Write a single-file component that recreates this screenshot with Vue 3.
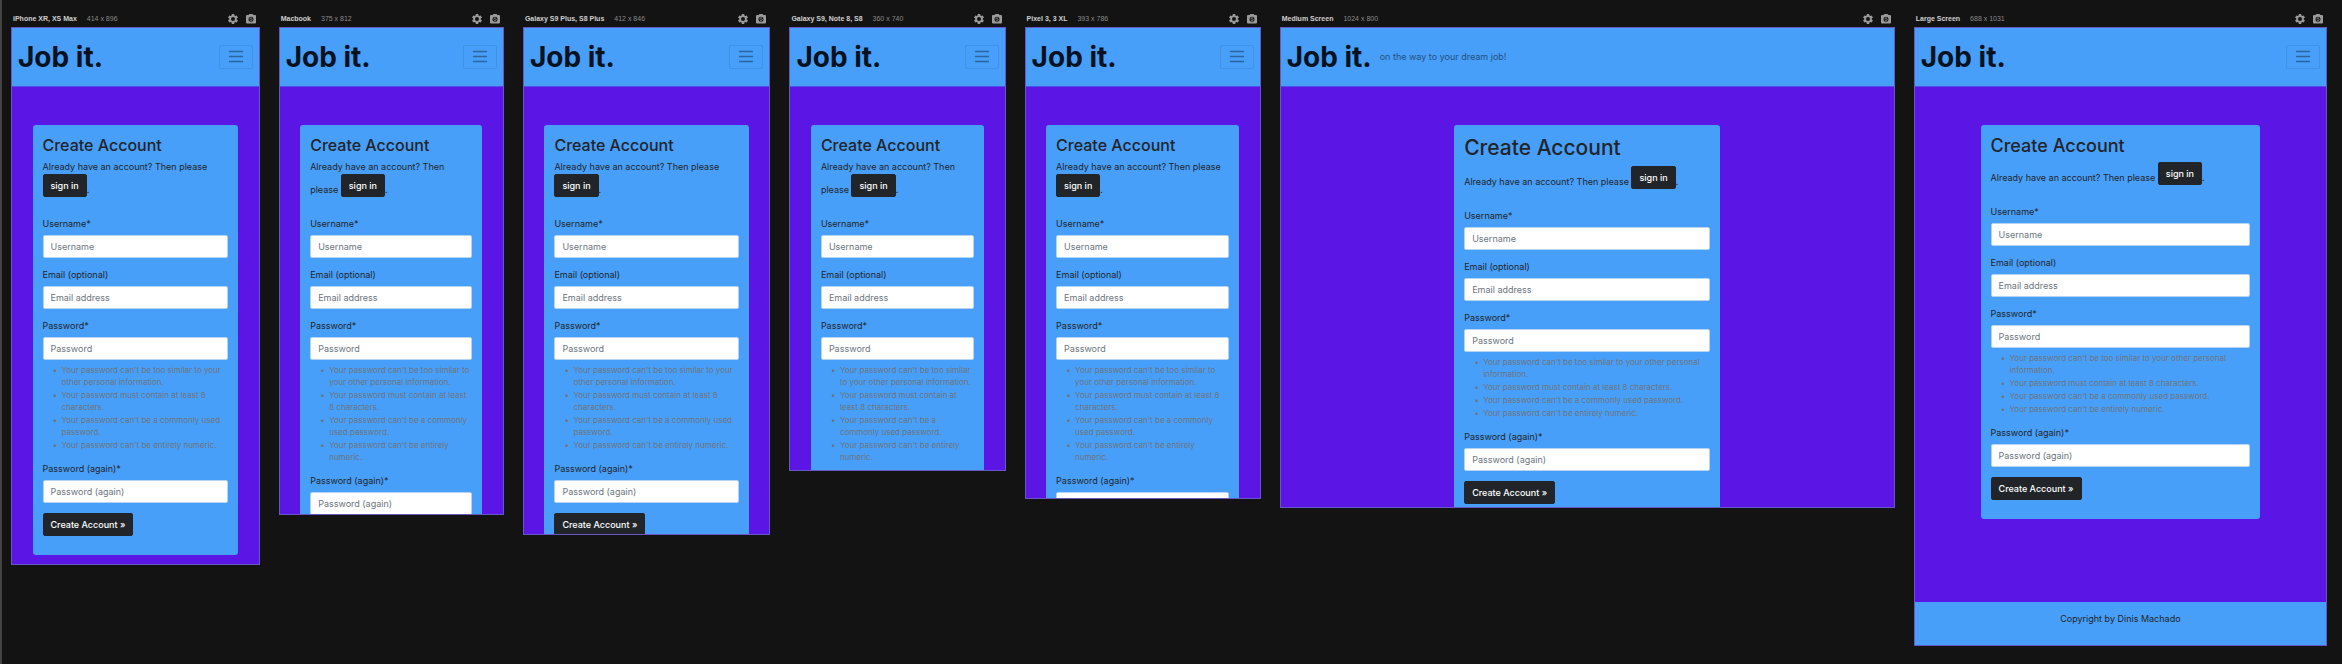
<script setup>
const devices = [
  { id: 'xr', name: 'iPhone XR, XS Max', w: 414, h: 896 },
  { id: 'macbook', name: 'Macbook', w: 375, h: 812 },
  { id: 's9plus', name: 'Galaxy S9 Plus, S8 Plus', w: 412, h: 846 },
  { id: 's9', name: 'Galaxy S9, Note 8, S8', w: 360, h: 740 },
  { id: 'pixel', name: 'Pixel 3, 3 XL', w: 393, h: 786 },
  { id: 'medium', name: 'Medium Screen', w: 1024, h: 800 },
  { id: 'large', name: 'Large Screen', w: 688, h: 1031 },
]

const columns = devices.map((d) => `minmax(0, ${d.w}fr)`).join(' ')

const fields = [
  { key: 'username', label: 'Username*', placeholder: 'Username', type: 'text' },
  { key: 'email', label: 'Email (optional)', placeholder: 'Email address', type: 'email' },
  { key: 'password1', label: 'Password*', placeholder: 'Password', type: 'password', help: true },
  { key: 'password2', label: 'Password (again)*', placeholder: 'Password (again)', type: 'password' },
]

const rules = [
  "Your password can't be too similar to your other personal information.",
  'Your password must contain at least 8 characters.',
  "Your password can't be a commonly used password.",
  "Your password can't be entirely numeric.",
]
</script>

<template>
  <main class="board" :style="{ gridTemplateColumns: columns }">
    <section v-for="d in devices" :key="d.id" class="device">
      <header class="bar">
        <h2 class="name">{{ d.name }}</h2>
        <span class="size">{{ d.w }} x {{ d.h }}</span>
        <button class="tool" type="button" aria-label="Settings">
          <svg viewBox="2 2 20 20"><path fill="currentColor" fill-rule="evenodd" d="M19.43 12.98c.04-.32.07-.64.07-.98s-.03-.66-.07-.98l2.11-1.65a.5.5 0 0 0 .12-.64l-2-3.46a.5.5 0 0 0-.61-.22l-2.49 1a7.3 7.3 0 0 0-1.69-.98l-.38-2.65A.49.49 0 0 0 14 2h-4a.49.49 0 0 0-.49.42l-.38 2.65c-.61.25-1.17.59-1.69.98l-2.49-1a.49.49 0 0 0-.61.22l-2 3.46a.49.49 0 0 0 .12.64l2.11 1.65c-.04.32-.07.65-.07.98s.03.66.07.98l-2.11 1.65a.5.5 0 0 0-.12.64l2 3.46c.12.22.39.3.61.22l2.49-1c.52.4 1.08.73 1.69.98l.38 2.65c.03.24.24.42.49.42h4c.25 0 .46-.18.49-.42l.38-2.65c.61-.25 1.17-.59 1.69-.98l2.49 1c.23.09.49 0 .61-.22l2-3.46a.5.5 0 0 0-.12-.64zM12 16a4 4 0 1 1 0-8 4 4 0 0 1 0 8z" /></svg>
        </button>
        <button class="tool" type="button" aria-label="Take screenshot">
          <svg viewBox="2 2 20 20"><path fill="currentColor" fill-rule="evenodd" d="M9 2 7.170 4H4a2 2 0 0 0-2 2v13a2 2 0 0 0 2 2h16a2 2 0 0 0 2-2V6a2 2 0 0 0-2-2h-3.170L15 2zM12 7.500a5 5 0 1 1 0 10 5 5 0 0 1 0-10z" /><path fill="none" stroke="currentColor" stroke-width="2" d="M9.500 12.500a2.500 2.500 0 0 1 4.500-1.500M14.500 12.500a2.500 2.500 0 0 1-4.500 1.500" /></svg>
        </button>
      </header>

      <div class="frame" :style="{ aspectRatio: `${d.w} / ${d.h}` }">
        <div class="page">
          <nav class="navbar">
            <a class="brand" href="#">Job it.</a>
            <span v-if="d.w >= 992" class="tagline">on the way to your dream job!</span>
            <button v-else class="toggler" type="button" aria-label="Toggle navigation">
              <svg viewBox="0 0 18 18"><path stroke="currentColor" stroke-width="1.300" stroke-linecap="round" d="M2.500 3.500h13M2.500 8.500h13M2.500 13.500h13" /></svg>
            </button>
          </nav>

          <div class="content">
            <div class="card">
              <h1 class="title">Create Account</h1>
              <p class="intro">Already have an account? Then please <a class="btn signin" href="#">sign in</a>.</p>
              <form class="form" @submit.prevent>
                <div v-for="f in fields" :key="f.key" class="field">
                  <label class="label" :for="`${d.id}-${f.key}`">{{ f.label }}</label>
                  <input :id="`${d.id}-${f.key}`" class="input" :type="f.type" :placeholder="f.placeholder" />
                  <ul v-if="f.help" class="help">
                    <li v-for="r in rules" :key="r">{{ r }}</li>
                  </ul>
                </div>
                <button class="btn" type="submit">Create Account »</button>
              </form>
            </div>
          </div>

          <footer class="footer">Copyright by Dinis Machado</footer>
        </div>
      </div>
    </section>
  </main>
</template>

<style>
body {
  margin: 0;
  background: #131313;
}
</style>

<style scoped>
.board {
  display: grid;
  align-items: start;
  gap: 19px;
  box-sizing: border-box;
  min-height: 100vh;
  padding: 0 15px 0 9px;
  border-left: 2px solid #444;
  background: #131313;
  color: #212529;
  font-family: Inter, "Liberation Sans", sans-serif;
  font-size: 9px;
  line-height: 14px;
}
.bar {
  display: flex;
  align-items: center;
  box-sizing: border-box;
  height: 27px;
  padding: 10px 4px 0 2px;
  font-family: "Liberation Sans", sans-serif;
  font-size: 7px;
  line-height: 9px;
  white-space: nowrap;
}
.name {
  margin: 0 10px 0 0;
  color: #d0d0d0;
  font-size: 7px;
  font-weight: 700;
}
.size {
  margin-right: auto;
  color: #8a8a8a;
}
.tool {
  width: 10px;
  height: 10px;
  margin-left: 8px;
  padding: 0;
  border: 0;
  background: none;
  color: #9a9a9a;
}
.tool svg {
  display: block;
  width: 100%;
}
.frame {
  container-type: inline-size;
  box-sizing: border-box;
  min-height: 0;
  overflow: hidden;
  border: 1px solid #6558c4;
  background: #5b16e6;
}
.page {
  display: flex;
  flex-direction: column;
  height: 100%;
}
.navbar {
  display: flex;
  flex: none;
  align-items: center;
  box-sizing: border-box;
  height: 59px;
  padding: 0 6px;
  border-bottom: 1px solid #4f4fee;
  background: #489ff9;
}
.brand {
  color: #04121f;
  font-size: 28px;
  font-weight: 700;
  line-height: 36px;
  text-decoration: none;
}
.tagline {
  margin-left: 8px;
  color: #24507d;
}
.toggler {
  display: flex;
  align-items: center;
  justify-content: center;
  width: 34px;
  height: 24px;
  margin-left: auto;
  padding: 0;
  border: 1px solid #4191e4;
  border-radius: 2px;
  background: none;
  color: #2a659f;
}
.toggler svg {
  width: 18px;
  height: 18px;
}
.content {
  flex: 1 0 auto;
  padding: 38px 0;
}
.card {
  box-sizing: border-box;
  width: calc(100% - 41px);
  margin: 0 auto;
  padding: 10px 10px 19px;
  border-radius: 3px;
  background: #489ff9;
}
.title {
  margin: 0 0 5px;
  font-size: 16px;
  font-weight: 500;
  line-height: 20px;
}
.intro {
  margin: 0 0 20px;
}
.btn {
  display: inline-block;
  box-sizing: border-box;
  height: 23px;
  padding: 4px 7px;
  border: 1px solid #212529;
  border-radius: 2px;
  background: #212529;
  color: #fff;
  font: inherit;
  font-weight: 500;
  line-height: 13px;
  text-decoration: none;
}
.signin {
  vertical-align: 4px;
}
.field {
  margin-bottom: 10px;
}
.label {
  display: block;
  margin-bottom: 4px;
}
.input {
  display: block;
  box-sizing: border-box;
  width: 100%;
  height: 23px;
  padding: 0 7px;
  border: 1px solid #b5d3f2;
  border-radius: 2px;
  background: #fff;
  color: #212529;
  font: inherit;
}
.input::placeholder {
  color: #6c757d;
  opacity: 1;
}
.help {
  margin: 4px 0 0;
  padding-left: 19px;
  color: #6c757d;
  font-size: 8px;
  line-height: 12px;
  list-style-type: "•  ";
}
.help li {
  padding-bottom: 1px;
}
.footer {
  flex: none;
  box-sizing: border-box;
  height: 43px;
  padding: 10px;
  background: #489ff9;
  text-align: center;
}
@container (min-width: 400px) {
  .card {
    width: 68%;
  }
  .title {
    font-size: 18px;
    line-height: 22px;
  }
}
@container (min-width: 590px) {
  .card {
    width: 43.4%;
  }
  .title {
    font-size: 21px;
    line-height: 26px;
  }
}
</style>
